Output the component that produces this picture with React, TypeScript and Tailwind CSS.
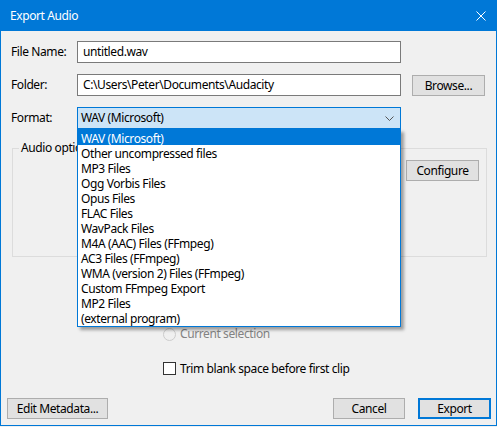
import React from "react";

const formats = [
  "WAV (Microsoft)",
  "Other uncompressed files",
  "MP3 Files",
  "Ogg Vorbis Files",
  "Opus Files",
  "FLAC Files",
  "WavPack Files",
  "M4A (AAC) Files (FFmpeg)",
  "AC3 Files (FFmpeg)",
  "WMA (version 2) Files (FFmpeg)",
  "Custom FFmpeg Export",
  "MP2 Files",
  "(external program)",
];

function Btn({ children, className = "" }: { children: React.ReactNode; className?: string }) {
  return (
    <div
      className={
        "h-[21px] bg-[#e1e1e1] border border-[#adadad] flex items-center justify-center text-[#000] leading-none " +
        className
      }
    >
      {children}
    </div>
  );
}

export default function App() {
  return (
    <div
      className="w-[497px] h-[427px] bg-[#f0f0f0] text-[12px] tracking-[-0.4px] text-black"
      style={{ fontFamily: '"Noto Sans", sans-serif' }}
    >
      <div className="w-[497px] h-[426px] border-x border-b border-[#0078d7] flex flex-col bg-[#f0f0f0]">
        {/* Title bar */}
        <div className="h-[31px] bg-[#0078d7] flex items-center justify-between pl-[9px] pr-[10px] shrink-0">
          <span className="text-white text-[12px] leading-none">Export Audio</span>
          <svg width="10" height="10" viewBox="0 0 10 10">
            <path d="M0.5 0.5 L9.5 9.5 M9.5 0.5 L0.5 9.5" stroke="white" strokeWidth="1" />
          </svg>
        </div>

        {/* Body */}
        <div className="flex flex-col pl-[9px] pt-[10px] flex-1">
          {/* File name */}
          <div className="flex items-center h-[22px]">
            <div className="w-[67px] pl-[1px]">File Name:</div>
            <div className="w-[324px] h-[22px] bg-white border border-[#7a7a7a] flex items-center pl-[5px]">
              untitled.wav
            </div>
          </div>
          {/* Folder */}
          <div className="flex items-center h-[22px] mt-[11px]">
            <div className="w-[67px] pl-[1px]">Folder:</div>
            <div className="w-[324px] h-[22px] bg-white border border-[#7a7a7a] flex items-center pl-[5px]">
              C:\Users\Peter\Documents\Audacity
            </div>
            <Btn className="w-[73px] ml-[11px] mt-[1px]">Browse...</Btn>
          </div>
          {/* Format */}
          <div className="flex items-center h-[22px] mt-[11px]">
            <div className="w-[67px] pl-[1px]">Format:</div>
            <div className="relative w-[324px] h-[22px]">
              <div className="w-full h-full bg-[#cce4f7] border border-[#0078d7] flex items-center justify-between pl-[3px] pr-[6px]">
                <span>WAV (Microsoft)</span>
                <svg width="9" height="5" viewBox="0 0 9 5">
                  <path d="M0.5 0.5 L4.5 4.5 L8.5 0.5" stroke="#555" strokeWidth="1" fill="none" />
                </svg>
              </div>
              {/* Dropdown list */}
              <div className="absolute left-0 top-[22px] w-[324px] h-[198px] bg-white border border-[#0078d7] z-10 shadow-[3px_3px_3px_rgba(0,0,0,0.35)] flex flex-col">
                {formats.map((f, i) => (
                  <div
                    key={f}
                    className={
                      "h-[15px] pl-[3px] leading-[15px] " +
                      (i === 0 ? "bg-[#0078d7] text-white" : "text-black")
                    }
                  >
                    <span className="inline-block align-top h-[15px] leading-[15px] relative top-[1px]">{f}</span>
                  </div>
                ))}
              </div>
            </div>
          </div>

          {/* Audio options group */}
          <div className="relative ml-[2px] mt-[19px] w-[475px] h-[109px] border border-[#dcdcdc] flex justify-end items-start pt-[11px] pr-[7px]">
            <span className="absolute left-[6px] -top-[9px] bg-[#f0f0f0] px-[2px] leading-[16px]">Audio options</span>
            <Btn className="w-[73px]">Configure</Btn>
          </div>

          {/* Radio */}
          <div className="flex items-center ml-[153px] mt-[71px] h-[13px]">
            <div className="w-[13px] h-[13px] rounded-full border border-[#cccccc] bg-[#f0f0f0]" />
            <span className="ml-[4px] text-[#838383] relative top-[-1px]">Current selection</span>
          </div>

          {/* Checkbox */}
          <div className="flex items-center ml-[153px] mt-[21px] h-[13px]">
            <div className="w-[13px] h-[13px] border border-[#333333] bg-white" />
            <span className="ml-[4px]">Trim blank space before first clip</span>
          </div>

          {/* Bottom buttons */}
          <div className="flex items-center mt-[23px] pr-[5px]">
            <Btn className="w-[101px] -ml-[3px]">Edit Metadata...</Btn>
            <div className="flex-1" />
            <Btn className="w-[72px]">Cancel</Btn>
            <div className="ml-[13px] w-[73px] h-[21px] bg-[#e1e1e1] border-2 border-[#0078d7] flex items-center justify-center leading-none">
              Export
            </div>
          </div>
        </div>
      </div>
    </div>
  );
}
